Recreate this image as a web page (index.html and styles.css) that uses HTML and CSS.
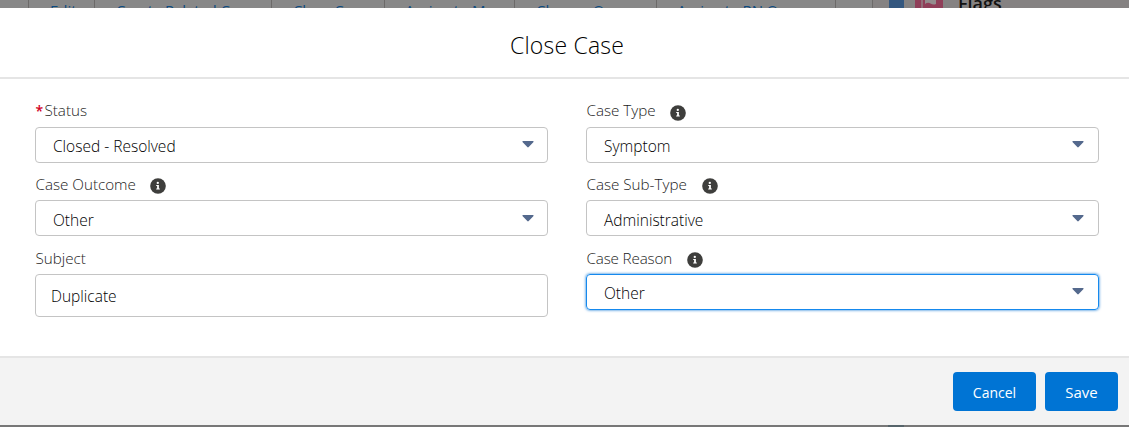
FILE: index.html
```html
<!DOCTYPE html>
<html lang="en">
<head>
<meta charset="utf-8">
<title>Close Case</title>
<link rel="stylesheet" href="styles.css">
</head>
<body>
<svg class="defs" width="0" height="0" aria-hidden="true">
  <symbol id="info" viewBox="0 0 16 16">
    <circle cx="8" cy="8" r="7.8" fill="#3e3e3c"/>
    <circle cx="7.8" cy="4.9" r="1.15" fill="#fff"/>
    <path d="M6.2 6.9h2.7v3.5h.9v1.1H6.2v-1.1h.9V7.9h-.9z" fill="#fff"/>
  </symbol>
  <symbol id="arrow" viewBox="0 0 12 7">
    <path d="M1.2 0h9.600c.8 0 1 .7.5 1.200L6.700 6.100c-.4.4-1 .4-1.400 0L.7 1.200C.2.7.4 0 1.200 0z" fill="#54698d"/>
  </symbol>
</svg>
<div class="page">
  <div class="backdrop">
    <div class="actions">
      <span class="action edit">Edit</span>
      <span class="action create">Create Related Case</span>
      <span class="action close">Close Case</span>
      <span class="action assign">Assign to Me</span>
      <span class="action change">Change Owner</span>
      <span class="action queue">Assign to RN Queue</span>
      <span class="action more"></span>
    </div>
    <div class="side">
      <span class="side-blue"></span>
      <span class="side-flag"><svg width="28" height="8" viewBox="0 0 28 8"><path d="M7 0v8" stroke="#948d8e" stroke-width="1.2"/><path d="M10 0h11v4c-2 1-4 .5-5.500-.5S12 2.500 10 4z" fill="#948d8e"/></svg></span>
      <span class="side-title">Flags</span>
    </div>
  </div>
  <main class="modal">
    <header class="modal-header"><h1 class="title">Close Case</h1></header>
    <div class="form">
      <div class="column left">
        <div class="field first">
          <div class="label"><span class="required">*</span><span class="t-status">Status</span></div>
          <div class="select"><span class="v-closed">Closed - Resolved</span><svg class="arrow"><use href="#arrow"/></svg></div>
        </div>
        <div class="field second">
          <div class="label"><span class="t-outcome">Case Outcome</span><svg class="info"><use href="#info"/></svg></div>
          <div class="select"><span class="v-other">Other</span><svg class="arrow"><use href="#arrow"/></svg></div>
        </div>
        <div class="field">
          <div class="label"><span class="t-subject">Subject</span></div>
          <div class="input"><span class="v-duplicate">Duplicate</span></div>
        </div>
      </div>
      <div class="column">
        <div class="field first">
          <div class="label"><span class="t-type">Case Type</span><svg class="info"><use href="#info"/></svg></div>
          <div class="select"><span class="v-symptom">Symptom</span><svg class="arrow"><use href="#arrow"/></svg></div>
        </div>
        <div class="field second">
          <div class="label"><span class="t-subtype">Case Sub-Type</span><svg class="info"><use href="#info"/></svg></div>
          <div class="select"><span class="v-admin">Administrative</span><svg class="arrow"><use href="#arrow"/></svg></div>
        </div>
        <div class="field">
          <div class="label"><span class="t-reason">Case Reason</span><svg class="info"><use href="#info"/></svg></div>
          <div class="select focused"><span class="v-other">Other</span><svg class="arrow"><use href="#arrow"/></svg></div>
        </div>
      </div>
    </div>
    <footer class="modal-footer">
      <button class="button cancel">Cancel</button>
      <button class="button save">Save</button>
    </footer>
  </main>
  <div class="bottom-edge"><span class="bottom-mark"></span></div>
</div>
</body>
</html>
```
FILE: styles.css
```css
* { box-sizing: border-box; }
body { margin: 0; font-family: "Open Sans", "Noto Sans", sans-serif; font-size: 15.5px; font-weight: 300; color: #000; background: #fff; }
.defs { display: block; }
.page { width: 1129px; height: 427px; display: flex; flex-direction: column; overflow: hidden; }

.backdrop { height: 8px; flex: none; display: flex; overflow: hidden; background: #858282; }
.actions { width: 873px; padding-left: 28px; display: flex; background: #888; }
.action { height: 30px; flex: none; padding-left: 21px; border-left: 1px solid #6c6a69; color: #0b4a80; font-size: 15px; font-weight: 400; line-height: 21px; white-space: nowrap; }
.edit { width: 66px; }
.create { width: 177px; letter-spacing: -0.15px; }
.close { width: 113px; letter-spacing: -0.1px; }
.assign { width: 130px; padding-left: 20px; }
.change { width: 142px; }
.queue { width: 179px; padding-left: 20px; letter-spacing: -0.15px; }
.more { width: 38px; border-right: 1px solid #6c6a69; }
.side { display: flex; padding-left: 16px; }
.side-blue { width: 15px; height: 8px; background: #34577f; }
.side-flag { width: 28px; height: 8px; margin-left: 11px; background: #903f59; }
.side-flag svg { display: block; }
.side-title { margin: -7px 0 0 15px; height: 30px; font-size: 18px; line-height: 21px; font-weight: 600; color: #111; }

.modal { height: 417px; flex: none; display: flex; flex-direction: column; background: #fff; }
.modal-header { height: 71px; flex: none; display: flex; justify-content: center; align-items: center; padding: 4px 0 0 5px; border-bottom: 2px solid #e5e5e5; }
.title { margin: 0; font-size: 23px; line-height: 30px; font-weight: 300; color: #000; letter-spacing: 0.2px; }
.form { height: 277px; flex: none; display: grid; grid-template-columns: 513px 513px; column-gap: 38px; padding: 22px 30px 0 35px; }
.column { display: flex; flex-direction: column; }
.field { height: 73px; flex: none; }
.second { height: 74px; }
.label { height: 26px; display: flex; align-items: flex-start; padding-left: 0.5px; line-height: 20px; color: #1c1c1c; font-size: 15.2px; white-space: nowrap; }
.required { width: 9px; color: #d1001f; font-size: 14px; font-weight: 600; }
.t-outcome { width: 100.5px; }
.t-type { width: 69px; }
.t-subtype { width: 101.5px; }
.t-reason { width: 86.5px; letter-spacing: -0.15px; }
.info { width: 16px; height: 16px; margin: 4px 0 0 14px; flex: none; }
.first .label { line-height: 19px; }
.second .label { line-height: 21px; }
.select { height: 36px; display: flex; align-items: center; justify-content: space-between; padding: 2px 14px 0 17px; border: 1px solid #c4c4c4; border-radius: 4px; white-space: nowrap; }
.second .select { padding-top: 4px; }
.left .select { padding-right: 13px; }
.arrow { width: 12px; height: 7px; margin-bottom: 3px; }
.input { height: 43px; display: flex; align-items: center; padding: 1px 15px 0; border: 1px solid #c4c4c4; border-radius: 4px; }
.focused { border-color: #1589ee; box-shadow: 0 0 3px #0070d2; }
.modal-footer { flex: 1; display: flex; justify-content: flex-end; align-items: flex-start; gap: 9px; padding: 14px 11px 0 0; border-top: 2px solid #e5e5e5; background: #f3f3f3; }
.button { height: 39px; padding: 2px 0 0; border: 0; border-radius: 4px; background: #0074d4; color: #fff; font-family: inherit; }
.cancel { width: 83px; font-size: 14px; }
.save { width: 73px; padding-top: 0; font-size: 15px; }
.bottom-edge { height: 2px; padding-left: 888px; background: #777; }
.bottom-mark { display: block; width: 16px; height: 2px; background: #56646a; }
```
